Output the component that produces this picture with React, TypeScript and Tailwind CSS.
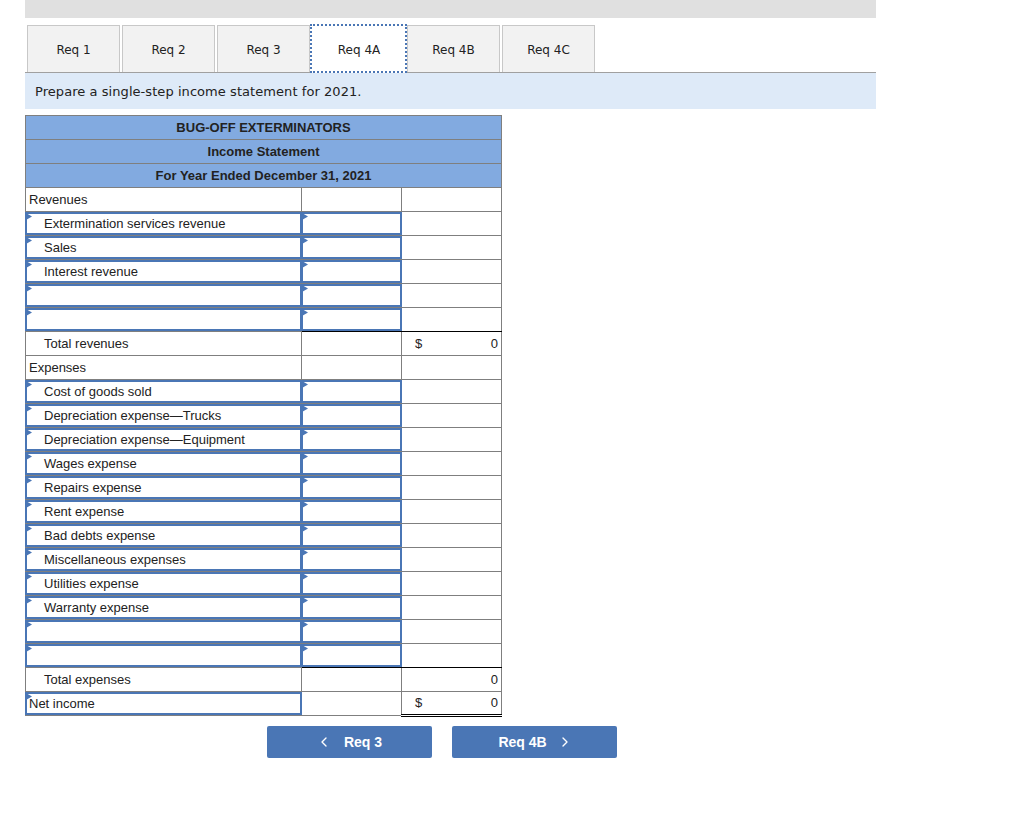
import { ChevronLeft, ChevronRight } from "lucide-react";

const tabs = ["Req 1", "Req 2", "Req 3", "Req 4A", "Req 4B", "Req 4C"];

type Row = {
    label?: string;
    indent?: boolean;
    labelInput?: boolean;
    amountInput?: boolean;
    dollar?: boolean;
    value?: string;
    // black rule under these cells
    ruleAmount?: boolean;
    ruleTotal?: boolean;
    double?: boolean;
};

const entry = (label?: string): Row => ({ label, indent: true, labelInput: true, amountInput: true });

const rows: Row[] = [
    { label: "Revenues" },
    entry("Extermination services revenue"),
    entry("Sales"),
    entry("Interest revenue"),
    entry(),
    { ...entry(), ruleAmount: true, ruleTotal: true },
    { label: "Total revenues", indent: true, dollar: true, value: "0" },
    { label: "Expenses" },
    entry("Cost of goods sold"),
    entry("Depreciation expense—Trucks"),
    entry("Depreciation expense—Equipment"),
    entry("Wages expense"),
    entry("Repairs expense"),
    entry("Rent expense"),
    entry("Bad debts expense"),
    entry("Miscellaneous expenses"),
    entry("Utilities expense"),
    entry("Warranty expense"),
    entry(),
    { ...entry(), ruleAmount: true, ruleTotal: true },
    { label: "Total expenses", indent: true, value: "0", ruleTotal: true },
    { label: "Net income", labelInput: true, dollar: true, value: "0", double: true },
];

function Marker() {
    return (
        <svg className="absolute left-[-1px] top-[-1px]" width="6" height="7" viewBox="0 0 6 7">
            <path d="M0 0 L6 3.5 L0 7 Z" fill="#4a76b5" />
        </svg>
    );
}

function InputBox({ children }: { children?: React.ReactNode }) {
    return (
        <div className="relative mx-[-1px] flex h-[23px] items-center border-2 border-[#4a76b5] bg-white pl-[1px]">
            <Marker />
            {children}
        </div>
    );
}

function Label({ row }: { row: Row }) {
    return <span className={row.indent ? "pl-[16px]" : "pl-[1px]"}>{row.label}</span>;
}

export default function App() {
    return (
        <div className="min-h-[818px] bg-white font-['Liberation_Sans',Arial,sans-serif] text-[13px] text-[#222]">
            <div className="ml-[25px] w-[851px]">
                <div className="h-[18px] bg-[#e0e0e0]" />

                {/* Tabs */}
                <div className="mt-[7px] flex gap-[2px] pl-[2px] font-['DejaVu_Sans',Verdana,sans-serif] text-[12px]">
                    {tabs.map((t) =>
                        t === "Req 4A" ? (
                            <div
                                key={t}
                                className="relative z-10 mx-[-2px] my-[-1px] flex h-[49px] w-[97px] items-center justify-center border-2 border-dotted border-[#4a76b5] bg-white pl-[1px] pt-[2px]"
                            >
                                {t}
                            </div>
                        ) : (
                            <div
                                key={t}
                                className="flex h-[47px] w-[93px] items-center justify-center border border-b-0 border-[#c8c8c8] bg-[#f2f2f2] pt-[2px]"
                            >
                                {t}
                            </div>
                        ),
                    )}
                </div>

                <div className="flex h-[37px] items-center border-t border-[#a0a0a0] bg-[#deeaf8] pl-[10px] pt-[1px] font-['DejaVu_Sans',Verdana,sans-serif] text-[13px] tracking-[0.06px]">
                    Prepare a single-step income statement for 2021.
                </div>

                {/* Statement */}
                <table className="mt-[6px] w-[476px] table-fixed border-collapse">
                    <colgroup>
                        <col className="w-[276px]" />
                        <col className="w-[100px]" />
                        <col className="w-[100px]" />
                    </colgroup>
                    <thead>
                        {["BUG-OFF EXTERMINATORS", "Income Statement", "For Year Ended December 31, 2021"].map((h) => (
                            <tr key={h} className="h-[24px]">
                                <th colSpan={3} className="border border-[#7f7f7f] bg-[#82aae0] p-0 text-center font-bold">
                                    {h}
                                </th>
                            </tr>
                        ))}
                    </thead>
                    <tbody>
                        {rows.map((row, i) => (
                            <tr key={i} className="h-[24px]">
                                <td className="border border-[#7f7f7f] p-0">
                                    {row.labelInput ? (
                                        <InputBox>
                                            <Label row={row} />
                                        </InputBox>
                                    ) : (
                                        <div className="pl-[2px]">
                                            <Label row={row} />
                                        </div>
                                    )}
                                </td>
                                <td className={`border border-[#7f7f7f] p-0 ${row.ruleAmount ? "border-b-black" : ""}`}>
                                    {row.amountInput && <InputBox />}
                                </td>
                                <td
                                    className={`border border-[#7f7f7f] p-0 ${row.ruleTotal ? "border-b-black" : ""} ${
                                        row.double ? "border-b-[3px] border-double border-b-black" : ""
                                    }`}
                                >
                                    {row.value && (
                                        <div className="flex justify-between pl-[13px] pr-[3px]">
                                            <span>{row.dollar ? "$" : ""}</span>
                                            <span>{row.value}</span>
                                        </div>
                                    )}
                                </td>
                            </tr>
                        ))}
                    </tbody>
                </table>
            </div>

            {/* Prev / next */}
            <div className="mt-[9px] flex w-[884px] justify-center gap-[20px] text-[14px] font-bold text-white">
                <button className="flex h-[32px] w-[165px] items-center justify-center gap-[12px] rounded-[2px] bg-[#4a76b5] pr-[1px]">
                    <ChevronLeft size={16} strokeWidth={2} />
                    <span>Req 3</span>
                </button>
                <button className="flex h-[32px] w-[165px] items-center justify-center gap-[10px] rounded-[2px] bg-[#4a76b5] pl-[2px]">
                    <span>Req 4B</span>
                    <ChevronRight size={16} strokeWidth={2} />
                </button>
            </div>
        </div>
    );
}
